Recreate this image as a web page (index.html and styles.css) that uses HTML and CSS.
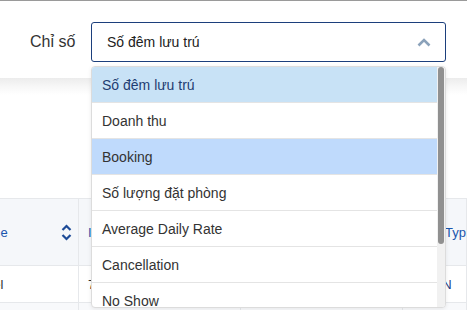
FILE: index.html
```html
<!DOCTYPE html>
<html lang="vi">
<head>
<meta charset="utf-8">
<link rel="stylesheet" href="styles.css">
</head>
<body>
<div class="topline"></div>
<header class="filter">
  <label class="filter-label">Chỉ số</label>
  <div class="select">
    <span class="select-value">Số đêm lưu trú</span>
    <svg class="chev" width="14" height="9" viewBox="0 0 14 9"><path d="M1.5 7.5 L7 2 L12.5 7.5" fill="none" stroke="#8ba2ba" stroke-width="2.6"/></svg>
  </div>
</header>
<div class="shadow"></div>
<div class="spacer"></div>
<div class="table">
  <div class="row head">
    <div class="cell c1">Name
      <svg class="sort" width="11" height="17" viewBox="0 0 11 17"><path d="M1.5 6 L5.5 2 L9.5 6 M1.5 11 L5.5 15 L9.5 11" fill="none" stroke="#1d4b97" stroke-width="2.2"/></svg>
    </div>
    <div class="cell">ID</div>
    <div class="cell">Code</div>
    <div class="cell tight">Room Type</div>
  </div>
  <div class="row">
    <div class="cell c1 dark">Hotel</div>
    <div class="cell dark">7</div>
    <div class="cell dark">A</div>
    <div class="cell blue">Twin N</div>
  </div>
  <div class="row alt">
    <div class="cell c1"></div>
    <div class="cell"></div>
    <div class="cell"></div>
    <div class="cell"></div>
  </div>
</div>

<div class="dropdown">
  <ul class="options">
    <li class="opt selected">Số đêm lưu trú</li>
    <li class="opt">Doanh thu</li>
    <li class="opt hover">Booking</li>
    <li class="opt">Số lượng đặt phòng</li>
    <li class="opt">Average Daily Rate</li>
    <li class="opt">Cancellation</li>
    <li class="opt">No Show</li>
  </ul>
  <div class="scrollbar"><div class="thumb"></div></div>
</div>
</body>
</html>
```

FILE: styles.css
```css
* { box-sizing: border-box; }
html, body { margin: 0; padding: 0; }
body {
  font-family: "Liberation Sans", Arial, sans-serif;
  background: #fff;
  color: #333;
  width: 467px;
  height: 310px;
  overflow: hidden;
  position: relative;
}
.topline { height: 1px; background: #9a9a9a; }
.filter {
  height: 77px;
  display: flex;
  align-items: flex-start;
  padding: 21px 0 0 30px;
}
.filter-label {
  font-size: 16px;
  line-height: 40px;
  width: 61px;
  color: #333;
}
.select {
  width: 355px;
  height: 40px;
  border: 1px solid #1c3f7c;
  border-radius: 3px;
  display: flex;
  align-items: center;
  justify-content: space-between;
  padding: 0 14px 0 15px;
}
.select-value { font-size: 14px; color: #222; }
.chev { display: block; }
.shadow {
  height: 17px;
  background: linear-gradient(#ececec, #f7f7f7 50%, #fff);
}
.spacer { height: 103px; }
.table { margin-left: -36px; width: 503px; overflow: hidden; }
.row {
  display: grid;
  grid-template-columns: 115px 162px 162px 64px;
  border-top: 1px solid #e6e8eb;
}
.row.head { background: #f5f7fa; height: 67px; }
.row:not(.head):not(.alt) { height: 37px; }
.row.alt { background: #f8f9fb; height: 8px; }
.cell {
  display: flex;
  align-items: center;
  padding-left: 9px;
  border-right: 1px solid #e6e8eb;
  font-size: 13px;
  color: #1a55ad;
  white-space: nowrap;
  overflow: hidden;
}
.cell.tight { padding-left: 4px; }
.cell.c1 { justify-content: space-between; padding-right: 6px; }
.cell.dark { color: #333; }
.cell.blue { color: #1a3f88; }
.sort { display: block; flex: none; }

.dropdown {
  position: absolute;
  left: 91px;
  top: 66px;
  width: 355px;
  height: 242px;
  background: #fff;
  border: 1px solid #dcdcdc;
  border-radius: 4px;
  box-shadow: 0 1px 4px rgba(0,0,0,0.08);
  display: flex;
  overflow: hidden;
}
.options {
  list-style: none;
  margin: 0;
  padding: 0;
  flex: 1;
}
.opt {
  height: 36px;
  border-bottom: 1px solid #e4e4e4;
  padding-left: 10px;
  display: flex;
  align-items: center;
  font-size: 14px;
  color: #333;
}
.opt.selected { background: #c8e2f6; color: #1f3d72; }
.opt.hover { background: #bfdafc; }
.scrollbar {
  width: 8px;
  background: #f1f1f1;
  padding: 0 1px;
}
.thumb {
  height: 177px;
  background: #909090;
  border-radius: 3px;
}
```
